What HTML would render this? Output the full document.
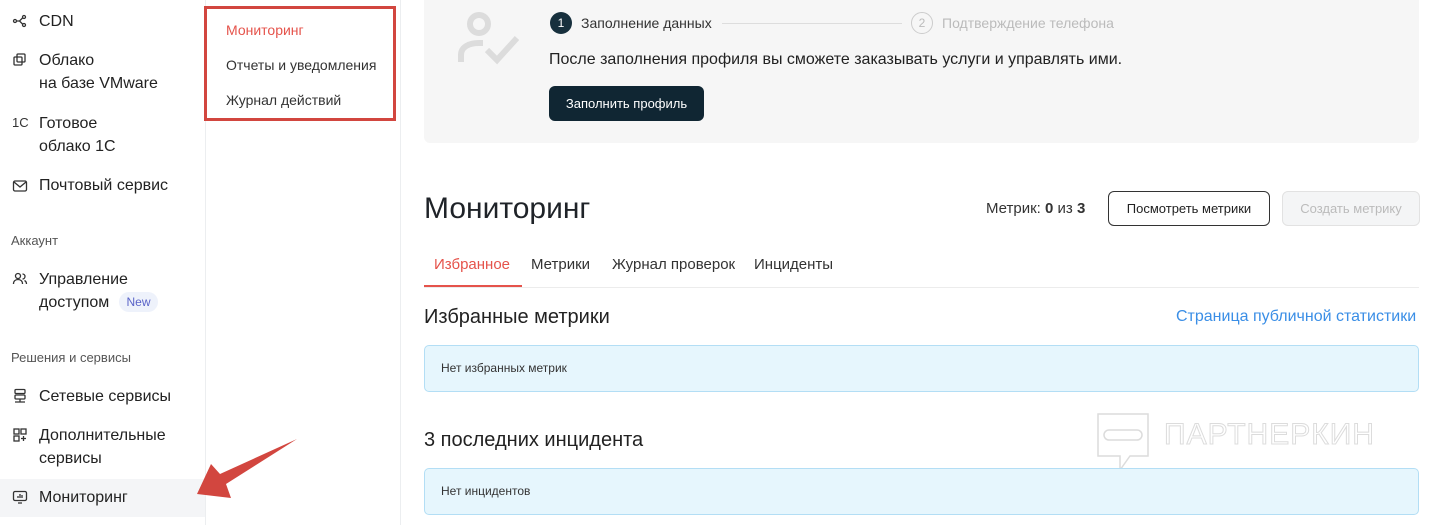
<!DOCTYPE html>
<html><head><meta charset="utf-8"><style>
*{box-sizing:border-box;margin:0;padding:0}
body{width:1429px;height:525px;overflow:hidden;background:#fff;font-family:"Liberation Sans",sans-serif;color:#1f2328;position:relative}
.abs{position:absolute}
.side{left:0;top:0;width:206px;height:525px;border-right:1px solid #eceef0}
.sub{left:206px;top:0;width:195px;height:525px;border-right:1px solid #eceef0}
.it{position:absolute;left:39px;font-size:16px;line-height:23px;color:#222}
.ic{position:absolute;left:12px;width:16px;height:16px;color:#333}
.cap{position:absolute;left:11px;font-size:13px;color:#555}
.red{left:204px;top:6px;width:192px;height:115px;border:3px solid #d2463f}
.sl{position:absolute;left:226px;font-size:14px;color:#333}
.panel{left:424px;top:0;width:995px;height:143px;background:#f6f6f6;border-radius:0 0 6px 6px}
.btn{position:absolute;border-radius:6px;font-size:13px;text-align:center}
.info{position:absolute;left:424px;width:995px;height:47px;background:#e6f6fd;border:1px solid #b3def5;border-radius:5px;font-size:12px;color:#333;padding-left:16px;line-height:45px}
</style></head><body>
<div class="abs side"></div>
<div class="abs sub"></div>
<div class="abs" style="left:0;top:479px;width:205px;height:38px;background:#f4f5f7"></div>

<svg class="ic" style="top:13px" viewBox="0 0 16 16" fill="none" stroke="#333" stroke-width="1.3"><circle cx="3" cy="8" r="1.5"/><circle cx="12" cy="4" r="1.5"/><circle cx="12" cy="12" r="1.5"/><path d="M4.5 8h3l3-3M7.5 8l3 3"/></svg>
<div class="it" style="top:10px">CDN</div>
<svg class="ic" style="top:52px" viewBox="0 0 16 16" fill="none" stroke="#333" stroke-width="1.3"><rect x="2" y="5" width="8" height="8" rx="1"/><rect x="5" y="2" width="8" height="8" rx="1"/></svg>
<div class="it" style="top:49px">Облако<br>на базе VMware</div>
<div class="ic" style="top:115px;font-size:13px">1C</div>
<div class="it" style="top:112px">Готовое<br>облако 1С</div>
<svg class="ic" style="top:178px" viewBox="0 0 16 16" fill="none" stroke="#333" stroke-width="1.3"><rect x="1.5" y="3" width="13" height="10" rx="1.5"/><path d="M2 4l6 5 6-5"/></svg>
<div class="it" style="top:174px">Почтовый сервис</div>
<div class="cap" style="top:233px">Аккаунт</div>
<svg class="ic" style="top:271px" viewBox="0 0 16 16" fill="none" stroke="#333" stroke-width="1.3"><circle cx="6" cy="5" r="2.5"/><path d="M1.5 13c0-3 2-4.5 4.5-4.5s4.5 1.5 4.5 4.5M10.5 3a2.5 2.5 0 010 5M12.5 9.5c1.3.7 2 2 2 3.5"/></svg>
<div class="it" style="top:268px">Управление<br>доступом</div>
<div class="abs" style="left:119px;top:292px;width:39px;height:20px;border-radius:10px;background:#eef2fb;color:#5a63c8;font-size:12px;text-align:center;line-height:20px">New</div>
<div class="cap" style="top:350px">Решения и сервисы</div>
<svg class="ic" style="top:388px" viewBox="0 0 16 16" fill="none" stroke="#333" stroke-width="1.3"><rect x="3" y="1.5" width="10" height="4" rx="1"/><rect x="3" y="7" width="10" height="4" rx="1"/><path d="M8 11v3M3 14h10"/></svg>
<div class="it" style="top:385px">Сетевые сервисы</div>
<svg class="ic" style="top:427px" viewBox="0 0 16 16" fill="none" stroke="#333" stroke-width="1.3"><rect x="2" y="2" width="5" height="5"/><rect x="9" y="2" width="5" height="5"/><rect x="2" y="9" width="5" height="5"/><path d="M11.5 9v5M9 11.5h5"/></svg>
<div class="it" style="top:424px">Дополнительные<br>сервисы</div>
<svg class="ic" style="top:489px" viewBox="0 0 16 16" fill="none" stroke="#333" stroke-width="1.3"><rect x="1.5" y="2.5" width="13" height="9" rx="1.5"/><path d="M6 14h4M6 9V7M8 9V5M10 9V6"/></svg>
<div class="it" style="top:486px">Мониторинг</div>

<div class="abs red"></div>
<div class="sl" style="top:22px;color:#e5534b">Мониторинг</div>
<div class="sl" style="top:57px">Отчеты и уведомления</div>
<div class="sl" style="top:92px">Журнал действий</div>

<svg class="abs" style="left:0;top:0" width="1429" height="525"><polygon points="197,494 211,464 220,474 297,439 226,484 231,498" fill="#d2463f"/></svg>

<div class="abs panel"></div>
<svg class="abs" style="left:455px;top:10px" width="70" height="58" viewBox="0 0 70 58" fill="none" stroke="#dcdcdc" stroke-width="6"><circle cx="24" cy="14" r="9"/><path d="M6 52V45c0-8 8-12 18-12h4"/><path d="M32 40l10 10 20-22"/></svg>
<div class="abs" style="left:550px;top:12px;width:22px;height:22px;border-radius:50%;background:#17303d;color:#fff;font-size:12px;text-align:center;line-height:22px">1</div>
<div class="abs" style="left:581px;top:15px;font-size:14px;color:#333">Заполнение данных</div>
<div class="abs" style="left:722px;top:23px;width:180px;height:1px;background:#ddd"></div>
<div class="abs" style="left:911px;top:12px;width:22px;height:22px;border-radius:50%;border:1px solid #ccc;color:#bbb;font-size:12px;text-align:center;line-height:20px">2</div>
<div class="abs" style="left:942px;top:15px;font-size:14px;color:#bbb">Подтверждение телефона</div>
<div class="abs" style="left:549px;top:51px;font-size:16px;color:#222">После заполнения профиля вы сможете заказывать услуги и управлять ими.</div>
<div class="btn" style="left:549px;top:86px;width:155px;height:35px;background:#102633;color:#fff;line-height:35px">Заполнить профиль</div>

<div class="abs" style="left:424px;top:192px;font-size:30px;color:#1f2328">Мониторинг</div>
<div class="abs" style="left:986px;top:200px;font-size:15px;color:#333">Метрик: <b>0</b> из <b>3</b></div>
<div class="btn" style="left:1108px;top:191px;width:162px;height:35px;border:1px solid #333;color:#222;line-height:33px">Посмотреть метрики</div>
<div class="btn" style="left:1282px;top:191px;width:138px;height:35px;border:1px solid #e2e2e2;background:#f4f5f6;color:#bbb;line-height:33px">Создать метрику</div>

<div class="abs" style="left:424px;top:287px;width:995px;height:1px;background:#ececec"></div>
<div class="abs" style="left:424px;top:285px;width:98px;height:2px;background:#e5534b"></div>
<div class="abs" style="left:434px;top:256px;font-size:15px;color:#e5534b">Избранное</div>
<div class="abs" style="left:531px;top:256px;font-size:15px;color:#333">Метрики</div>
<div class="abs" style="left:612px;top:256px;font-size:15px;color:#333">Журнал проверок</div>
<div class="abs" style="left:754px;top:256px;font-size:15px;color:#333">Инциденты</div>

<div class="abs" style="left:424px;top:306px;font-size:20px;color:#222">Избранные метрики</div>
<div class="abs" style="left:1176px;top:308px;font-size:16px;color:#3a8ee6">Страница публичной статистики</div>
<div class="info" style="top:345px">Нет избранных метрик</div>

<svg class="abs" style="left:1096px;top:412px" width="56" height="60" viewBox="0 0 56 60" fill="none" stroke="#dcdcdc" stroke-width="1.5"><path d="M2 2h50v42H34l-10 14V44H2z"/><rect x="8" y="18" width="38" height="10" rx="5"/></svg>
<div class="abs" style="left:1164px;top:418px;font-size:30px;color:transparent;-webkit-text-stroke:1px #dcdcdc;letter-spacing:1px">ПАРТНЕРКИН</div>

<div class="abs" style="left:424px;top:429px;font-size:20px;color:#222">3 последних инцидента</div>
<div class="info" style="top:468px">Нет инцидентов</div>
</body></html>
